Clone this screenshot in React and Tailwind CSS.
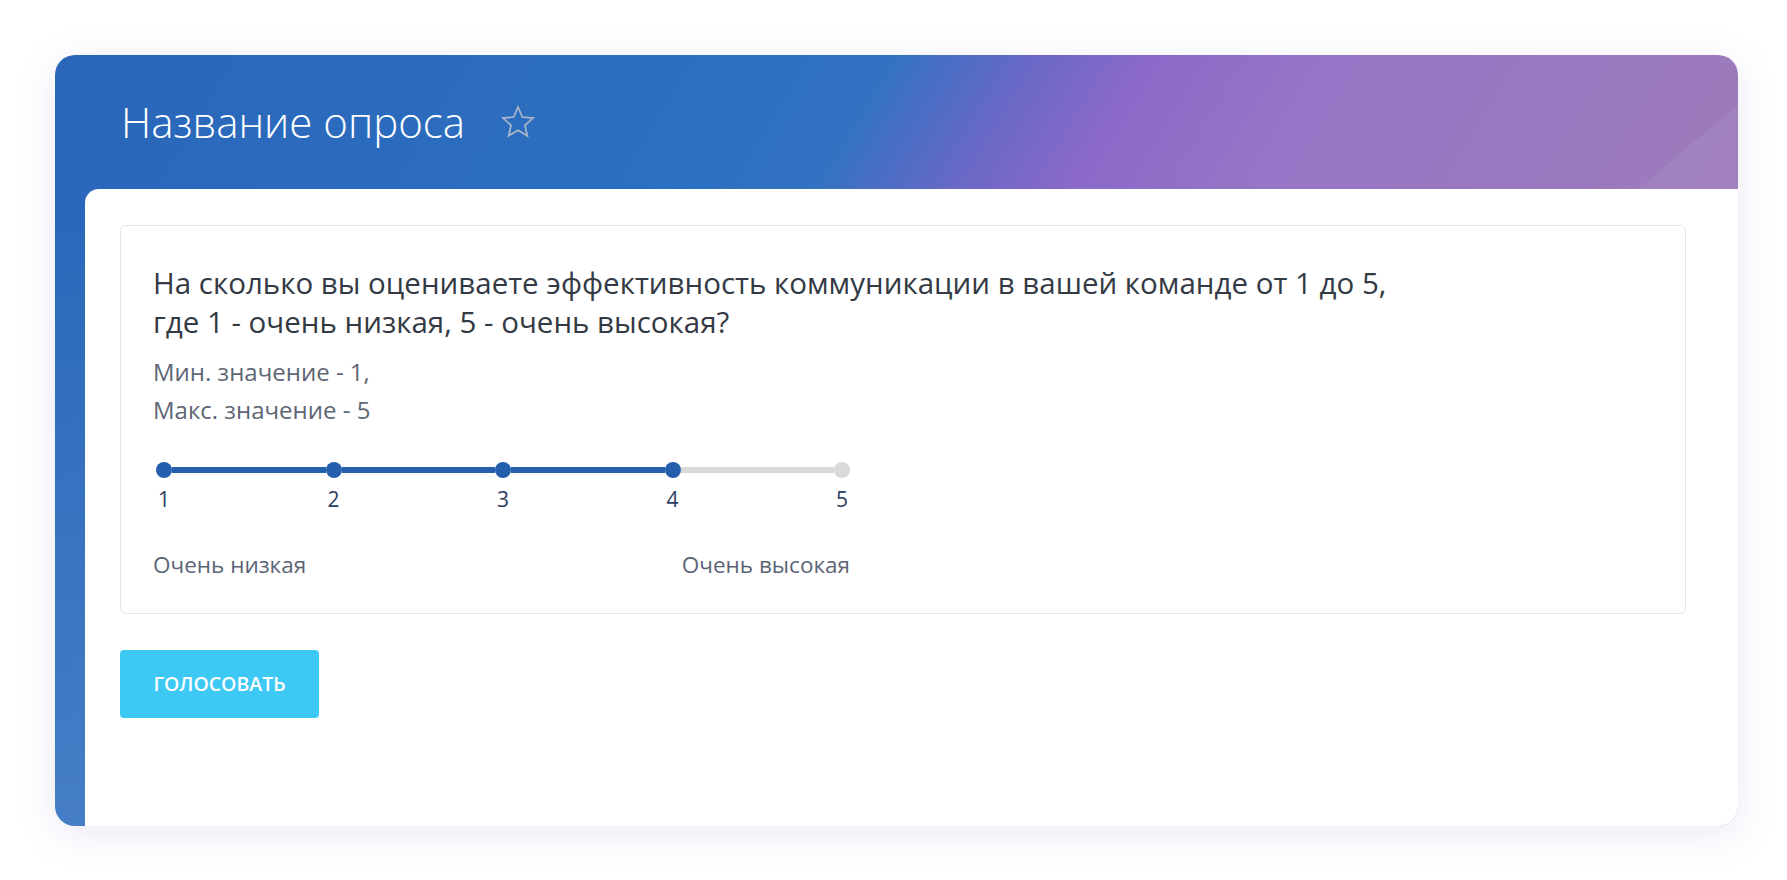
import { useState } from 'react';

const font = { fontFamily: '"Open Sans", "Noto Sans", sans-serif' };

function StarIcon() {
    return (
        <svg width="38" height="38" viewBox="0 0 24 24" fill="none">
            <polygon
                points="12,2.6 14.75,8.85 21.5,9.5 16.4,14.05 17.9,20.75 12,17.25 6.1,20.75 7.6,14.05 2.5,9.5 9.25,8.85"
                stroke="#aab5c8"
                strokeWidth="1.1"
                strokeLinejoin="miter"
            />
        </svg>
    );
}

function ScaleSlider({ value, max }) {
    const steps = Array.from({ length: max }, (_, i) => i + 1);

    return (
        <div className="w-[697px]">
            <div className="mt-[33px] flex items-center pl-[3px]">
                {steps.map((step, index) => (
                    <div key={step} className={`flex items-center ${index === 0 ? '' : 'flex-1'}`}>
                        {index > 0 && (
                            <div
                                className={`h-[6px] flex-1 ${step <= value ? 'bg-[#245fae]' : 'bg-[#d9d9d9]'}`}
                            ></div>
                        )}
                        <div
                            className={`h-4 w-4 shrink-0 rounded-full ${step <= value ? 'bg-[#245fae]' : 'bg-[#d9d9d9]'}`}
                        ></div>
                    </div>
                ))}
            </div>
            <div className="mt-[7px] flex justify-between pl-[3px] text-[21px] leading-[28px] text-[#2b3d63]">
                {steps.map((step) => (
                    <span key={step} className="w-4 text-center">{step}</span>
                ))}
            </div>
            <div className="mt-[38px] flex justify-between text-[22.5px] leading-[28px] text-[#5b6476]">
                <span>Очень низкая</span>
                <span>Очень высокая</span>
            </div>
        </div>
    );
}

export default function App() {
    const [value] = useState(4);

    return (
        <div className="min-h-screen bg-white pt-[55px] pl-[55px] pr-[49px]" style={font}>
            <div className="relative overflow-hidden rounded-[20px] bg-[linear-gradient(121deg,#2a66b9_0%,#2c6fc0_31%,#3272c2_39%,#6c68c6_46%,#8a69c9_51%,#9575c6_59%,#9b7bbd_77%,#a07bb2_100%)] shadow-[0_8px_40px_rgba(110,80,180,0.13)]">
                <div className="pointer-events-none absolute inset-0 bg-[linear-gradient(to_bottom,rgba(255,255,255,0)_20%,rgba(255,255,255,0.12)_100%)]"></div>

                {/* light corner in the header */}
                <svg className="pointer-events-none absolute right-0 top-0" width="100" height="134" viewBox="0 0 100 134">
                    <polygon points="0,134 100,50 100,134" fill="rgba(255,255,255,0.06)" />
                </svg>

                <div className="relative flex h-[134px] items-center gap-[34px] pl-[66px]">
                    <h1 className="text-[42px] font-light leading-none text-white">Название опроса</h1>
                    <StarIcon />
                </div>

                <div className="relative ml-[30px] rounded-tl-[14px] bg-white pl-[35px] pr-[52px] pt-[36px] pb-[108px]">
                    <div className="rounded-[6px] border border-[#e4e4ea] pl-[32px] pt-[37px] pb-[34px]">
                        <p className="text-[29.5px] leading-[39px] text-[#343a44]">
                            На сколько вы оцениваете эффективность коммуникации в вашей команде от 1 до 5,
                            <br />
                            где 1 - очень низкая, 5 - очень высокая?
                        </p>
                        <div className="mt-[12px] text-[24px] leading-[38px] text-[#5e6674]">
                            <div>Мин. значение - 1,</div>
                            <div>Макс. значение - 5</div>
                        </div>
                        <ScaleSlider value={value} max={5} />
                    </div>

                    <button className="mt-[36px] flex h-[68px] w-[199px] items-center justify-center rounded-[4px] bg-[#3ec9f5] text-[19.5px] font-semibold text-white">
                        ГОЛОСОВАТЬ
                    </button>
                </div>
            </div>
        </div>
    );
}
